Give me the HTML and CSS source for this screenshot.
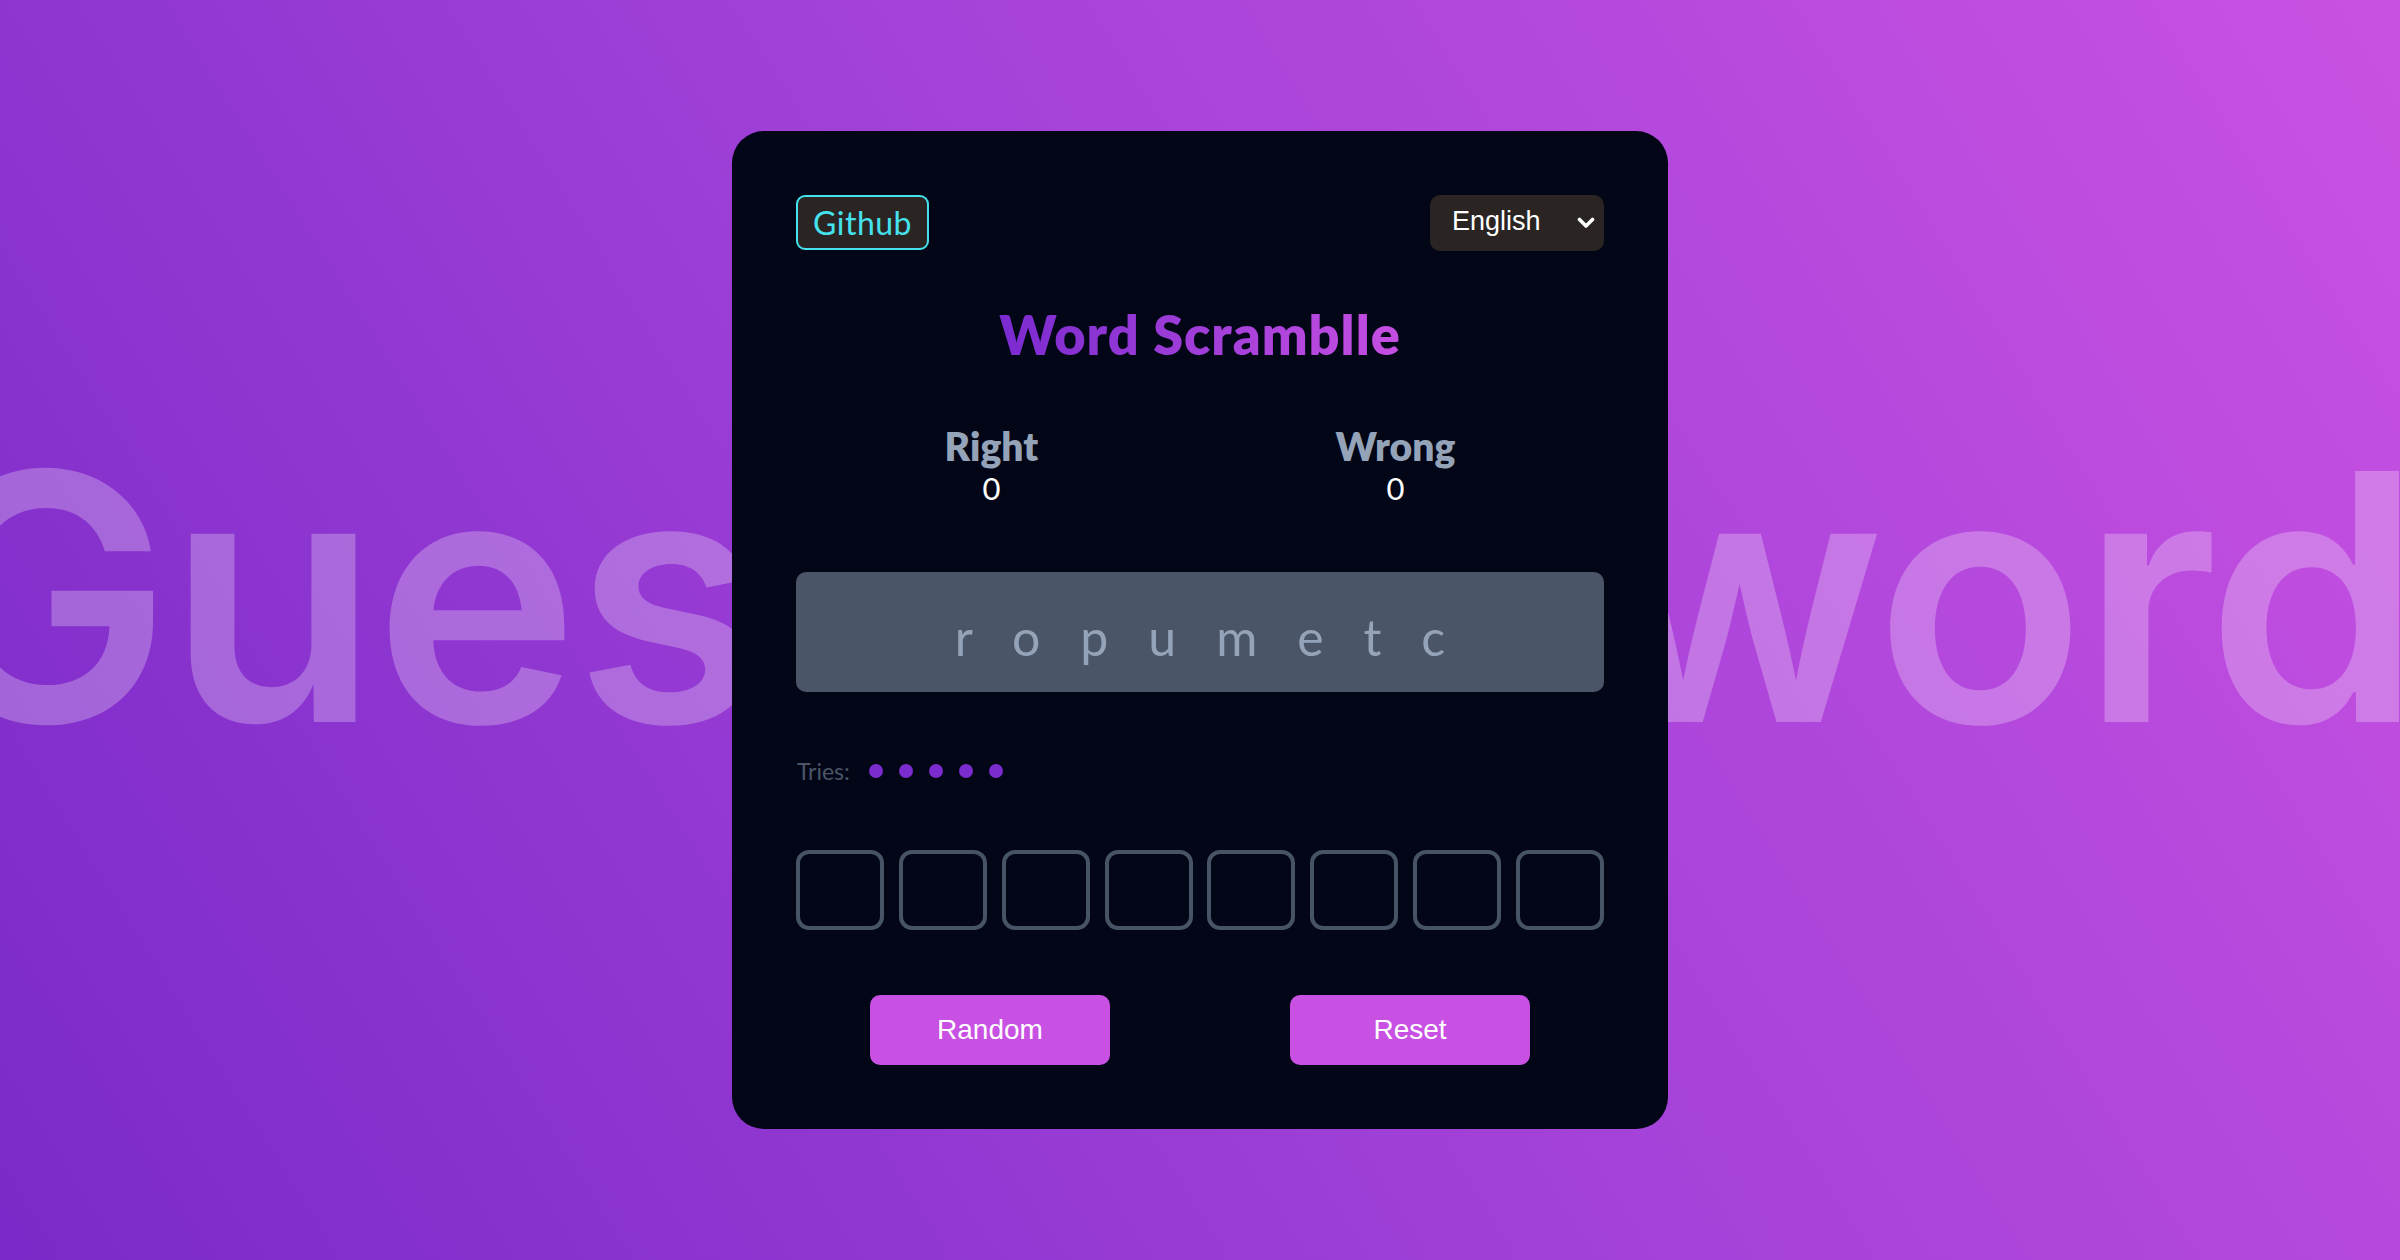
FILE: index.html
```html
<!DOCTYPE html>
<html lang="en">
<head>
<meta charset="utf-8">
<title>Word Scramblle</title>
<link rel="stylesheet" href="styles.css">
</head>
<body>
  <div class="backdrop" aria-hidden="true">
    <span class="bg-word bg-left">Guess</span>
    <span class="bg-word bg-right">word</span>
  </div>

  <main class="card">
    <header class="top">
      <a class="github" href="#">Github</a>
      <div class="lang">
        <select class="lang-select">
          <option>English</option>
        </select>
        <svg class="chev" width="18" height="12" viewBox="0 0 18 12"><path d="M2.5 2.5 L9 9 L15.5 2.5" fill="none" stroke="#ffffff" stroke-width="3.6" stroke-linecap="round" stroke-linejoin="round"/></svg>
      </div>
    </header>

    <h1 class="title">Word Scramblle</h1>

    <section class="score">
      <div class="score-item">
        <div class="score-label">Right</div>
        <div class="score-num">0</div>
      </div>
      <div class="score-item">
        <div class="score-label">Wrong</div>
        <div class="score-num">0</div>
      </div>
    </section>

    <div class="scramble">ropumetc</div>

    <div class="tries">
      <span class="tries-label">Tries:</span>
      <span class="dot"></span>
      <span class="dot"></span>
      <span class="dot"></span>
      <span class="dot"></span>
      <span class="dot"></span>
    </div>

    <div class="letters">
      <input class="letter" maxlength="1">
      <input class="letter" maxlength="1">
      <input class="letter" maxlength="1">
      <input class="letter" maxlength="1">
      <input class="letter" maxlength="1">
      <input class="letter" maxlength="1">
      <input class="letter" maxlength="1">
      <input class="letter" maxlength="1">
    </div>

    <div class="actions">
      <button class="btn">Random</button>
      <button class="btn">Reset</button>
    </div>
  </main>
</body>
</html>
```

FILE: styles.css
```css
* {
  box-sizing: border-box;
}

html, body {
  margin: 0;
  padding: 0;
}

body {
  min-height: 100vh;
  display: flex;
  align-items: center;
  justify-content: center;
  position: relative;
  overflow: hidden;
  background: linear-gradient(58deg, #7a2ac8 0%, #a241d8 50%, #c951e2 100%);
  font-family: "Lato", "Noto Sans", sans-serif;
}

.backdrop {
  position: absolute;
  left: -87px;
  right: -18px;
  top: 390px;
  display: flex;
  justify-content: space-between;
  pointer-events: none;
}

.bg-word {
  font-family: "Inter", "Lato", sans-serif;
  font-size: 345px;
  font-weight: 600;
  line-height: 1.2;
  color: rgba(255, 255, 255, 0.26);
  white-space: nowrap;
  letter-spacing: -4px;
}

.card {
  position: relative;
  width: 936px;
  padding: 64px;
  background: #020617;
  border-radius: 32px;
  display: flex;
  flex-direction: column;
}

.top {
  display: flex;
  justify-content: space-between;
  align-items: center;
  height: 56px;
}

.github {
  display: inline-flex;
  align-items: center;
  justify-content: center;
  width: 133px;
  height: 55px;
  border: 2px solid #45e2ee;
  border-radius: 9px;
  background: #2a2523;
  color: #45e2ee;
  font-family: "Lato", sans-serif;
  font-size: 32px;
  text-decoration: none;
  letter-spacing: 0.5px;
  padding-bottom: 1px;
}

.lang {
  position: relative;
  width: 174px;
  height: 56px;
}

.lang-select {
  appearance: none;
  -webkit-appearance: none;
  width: 100%;
  height: 100%;
  border: none;
  border-radius: 10px;
  background: #2a2523;
  color: #ffffff;
  font-family: "Liberation Sans", Arial, sans-serif;
  font-size: 27px;
  padding: 0 0 3px 22px;
  outline: none;
}

.chev {
  position: absolute;
  right: 9px;
  top: 22px;
  pointer-events: none;
}

.title {
  margin: 52px 0 0;
  align-self: center;
  padding: 0 4px;
  text-align: center;
  font-family: "Lato", sans-serif;
  font-size: 54px;
  font-weight: 800;
  line-height: 1.2;
  letter-spacing: 1px;
  background: linear-gradient(90deg, #7a2ad0 0%, #9d3cd8 45%, #c64fe2 100%);
  background-clip: text;
  -webkit-background-clip: text;
  color: transparent;
}

.score {
  margin-top: 56px;
  display: flex;
  justify-content: space-around;
}

.score-item {
  display: flex;
  flex-direction: column;
  align-items: center;
}

.score-label {
  font-size: 39px;
  font-weight: 800;
  line-height: 1.2;
  color: #94a3b8;
}

.score-num {
  font-size: 31px;
  line-height: 1.2;
  color: #ffffff;
}

.scramble {
  margin-top: 65px;
  height: 120px;
  padding: 35px 0 0 40px;
  background: #4a5568;
  border-radius: 10px;
  text-align: center;
  font-size: 50px;
  line-height: 1.2;
  letter-spacing: 40px;
  color: #94a3b8;
}

.tries {
  margin-top: 65px;
  display: flex;
  align-items: center;
  height: 28px;
}

.tries-label {
  font-size: 23px;
  line-height: 1.2;
  color: #4b5567;
  margin-right: 19px;
  margin-left: 1px;
}

.dot {
  width: 14px;
  height: 14px;
  border-radius: 50%;
  background: #7b2ccf;
  margin-right: 16px;
}

.letters {
  margin-top: 65px;
  display: flex;
  justify-content: space-between;
}

.letter {
  width: 88px;
  height: 80px;
  border: 4px solid #475466;
  border-radius: 13px;
  background: transparent;
  color: #ffffff;
  font-size: 36px;
  text-align: center;
  outline: none;
}

.actions {
  margin-top: 65px;
  display: flex;
  justify-content: center;
  gap: 180px;
}

.btn {
  width: 240px;
  height: 70px;
  border: none;
  border-radius: 10px;
  background: #c850e3;
  color: #ffffff;
  font-family: "Liberation Sans", Arial, sans-serif;
  font-size: 28px;
  cursor: pointer;
}
```
